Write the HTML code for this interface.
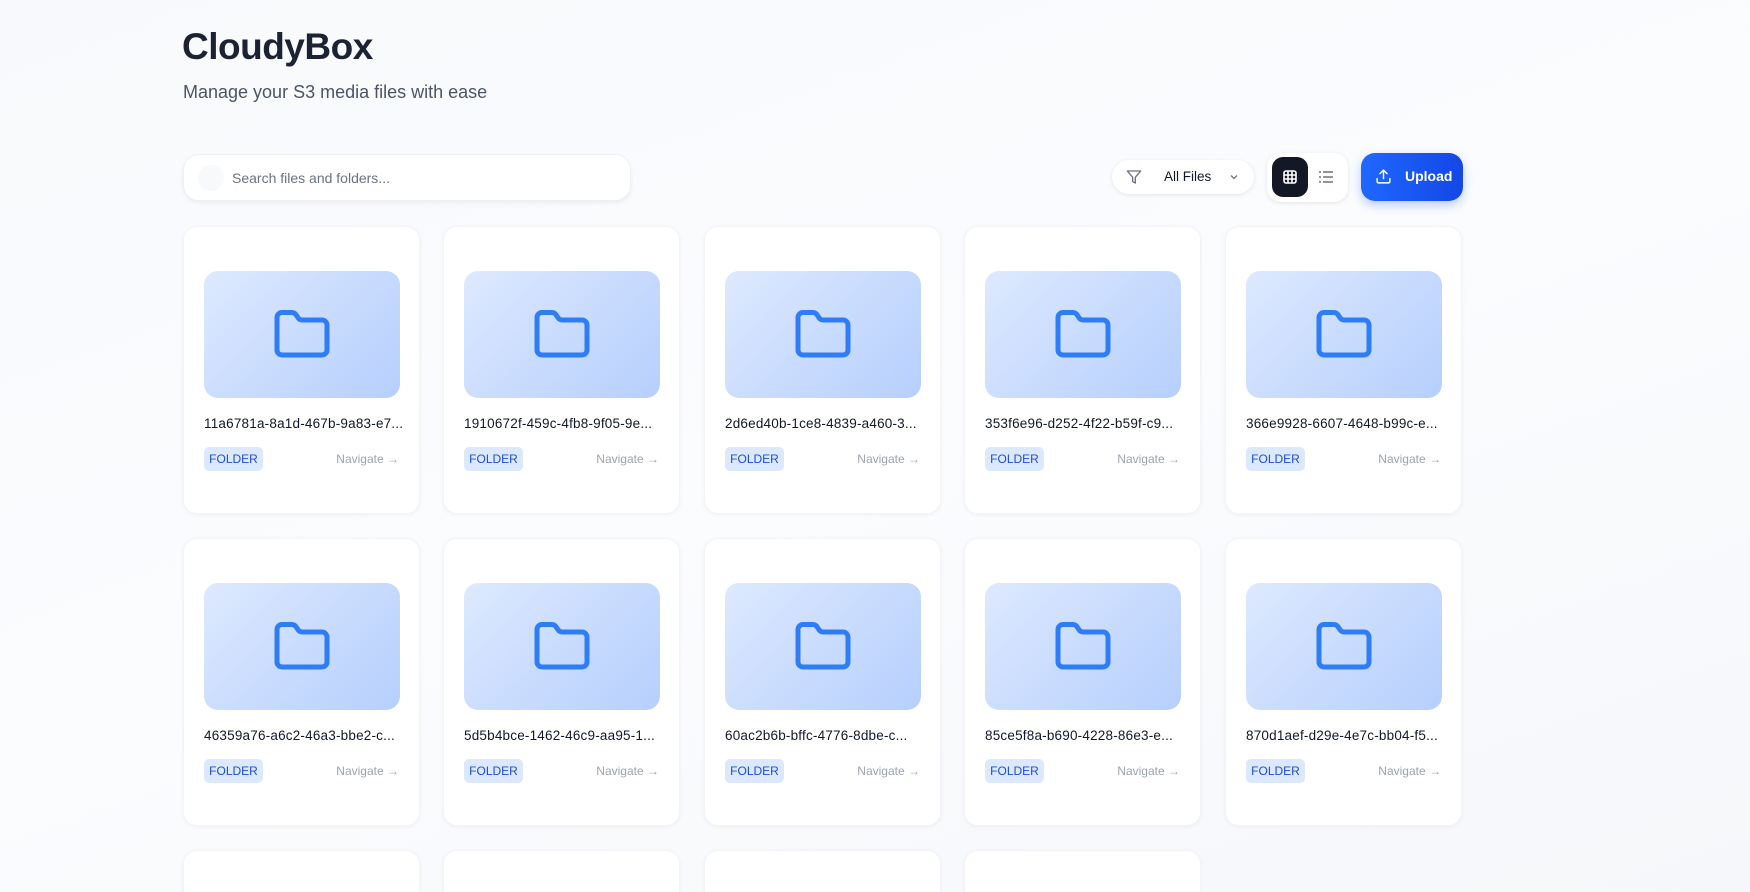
<!DOCTYPE html>
<html><head><meta charset="utf-8"><style>
*{box-sizing:border-box;margin:0;padding:0}
html,body{width:1750px;height:892px;overflow:hidden}
body{font-family:"Liberation Sans",sans-serif;background:linear-gradient(160deg,#f7f9fc 0%,#fbfcfe 50%,#f5f7fa 100%);position:relative;color:#111827}
h1{position:absolute;left:182px;top:26px;font-size:37px;font-weight:700;color:#1a2233;letter-spacing:-0.5px}
.sub{position:absolute;left:183px;top:82px;font-size:18px;color:#4b5563}
.search{position:absolute;left:183px;top:154px;width:448px;height:47px;background:#fff;border:1px solid #eef0f3;border-radius:16px;box-shadow:0 2px 4px rgba(0,0,0,.06)}
.search .c{position:absolute;left:14px;top:10px;width:26px;height:26px;border-radius:50%;background:#f8f9fb}
.search span{position:absolute;left:48px;top:15px;font-size:14px;color:#6b7280}
.filter{position:absolute;left:1112px;top:160px;width:142px;height:34px;background:#fff;border-radius:17px;box-shadow:0 1px 4px rgba(0,0,0,.1)}
.filter span{position:absolute;left:52px;top:9px;font-size:13.5px;color:#111827}
.toggle{position:absolute;left:1267px;top:153px;width:81px;height:49px;background:#fff;border-radius:14px;box-shadow:0 1px 4px rgba(0,0,0,.1)}
.toggle .on{position:absolute;left:5px;top:4px;width:36px;height:40px;background:#121826;border-radius:11px}
.upload{position:absolute;left:1361px;top:153px;width:102px;height:48px;border-radius:14px;background:linear-gradient(90deg,#1f68ff,#1447e6);box-shadow:0 4px 10px rgba(30,90,255,.3)}
.upload span{position:absolute;left:44px;top:15px;font-size:14px;font-weight:700;color:#fff}
.card{position:absolute;width:237px;height:288px;background:#fff;border:1px solid #f3f4f7;border-radius:14px;box-shadow:0 1px 4px rgba(0,0,0,.05)}
.thumb{position:absolute;left:20px;top:44px;width:196px;height:127px;border-radius:14px;background:linear-gradient(135deg,#dde9fe,#b6cffd)}
.thumb svg{position:absolute;left:68px;top:34px}
.name{position:absolute;left:20px;top:189px;font-size:13.5px;color:#111827;letter-spacing:0.2px;white-space:nowrap}
.badge{position:absolute;left:20px;top:220px;width:59px;height:24px;background:#dbe8fe;border-radius:5px;color:#1d4ed8;font-size:12px;text-align:center;line-height:24px}
.nav{position:absolute;right:20px;top:225px;font-size:12px;color:#9ca3af}
</style></head><body>
<h1>CloudyBox</h1>
<div class="sub">Manage your S3 media files with ease</div>
<div class="search"><div class="c"></div><span>Search files and folders...</span></div>
<div class="filter">
<svg style="position:absolute;left:14px;top:9px" width="16" height="16" viewBox="0 0 24 24" fill="none" stroke="#6b7280" stroke-width="2" stroke-linejoin="round"><path d="M22 3H2l8 9.46V19l4 2v-8.54L22 3z"/></svg>
<span>All Files</span>
<svg style="position:absolute;left:116px;top:11px" width="12" height="12" viewBox="0 0 24 24" fill="none" stroke="#6b7280" stroke-width="2.5"><path d="M6 9l6 6 6-6"/></svg>
</div>
<div class="toggle"><div class="on">
<svg style="position:absolute;left:11px;top:13px" width="14" height="14" viewBox="0 0 14 14" fill="none" stroke="#fff" stroke-width="1.6"><rect x="1" y="1" width="12" height="12" rx="2"/><path d="M5 1v12M9 1v12M1 5h12M1 9h12"/></svg></div>
<svg style="position:absolute;left:52px;top:18px" width="14" height="12" viewBox="0 0 14 12" stroke="#6b7280" stroke-width="1.6"><path d="M0 1h2M4 1h10M0 6h2M4 6h10M0 11h2M4 11h10"/></svg>
</div>
<div class="upload">
<svg style="position:absolute;left:14px;top:15px" width="17" height="17" viewBox="0 0 24 24" fill="none" stroke="#fff" stroke-width="2" stroke-linecap="round" stroke-linejoin="round"><path d="M21 15v4a2 2 0 0 1-2 2H5a2 2 0 0 1-2-2v-4"/><path d="M17 8l-5-5-5 5"/><path d="M12 3v12"/></svg>
<span>Upload</span></div>
<div id="g"></div>
<script>
var names=["11a6781a-8a1d-467b-9a83-e7...","1910672f-459c-4fb8-9f05-9e...","2d6ed40b-1ce8-4839-a460-3...","353f6e96-d252-4f22-b59f-c9...","366e9928-6607-4648-b99c-e...","46359a76-a6c2-46a3-bbe2-c...","5d5b4bce-1462-46c9-aa95-1...","60ac2b6b-bffc-4776-8dbe-c...","85ce5f8a-b690-4228-86e3-e...","870d1aef-d29e-4e7c-bb04-f5...","","","",""];
var xs=[183,443,704,964,1225],ys=[226,538,850],h="";
names.forEach(function(n,i){var x=xs[i%5],y=ys[Math.floor(i/5)];
h+='<div class="card" style="left:'+x+'px;top:'+y+'px"><div class="thumb"><svg width="60" height="60" viewBox="0 0 24 24" fill="none" stroke="#2f7df6" stroke-width="2" stroke-linejoin="round"><path d="M20 20a2 2 0 0 0 2-2V8a2 2 0 0 0-2-2h-7.9a2 2 0 0 1-1.69-.9L9.6 3.9A2 2 0 0 0 7.93 3H4a2 2 0 0 0-2 2v13a2 2 0 0 0 2 2Z"/></svg></div><div class="name">'+n+'</div><div class="badge">FOLDER</div><div class="nav">Navigate →</div></div>';});
document.getElementById("g").innerHTML=h;
</script>
</body></html>
